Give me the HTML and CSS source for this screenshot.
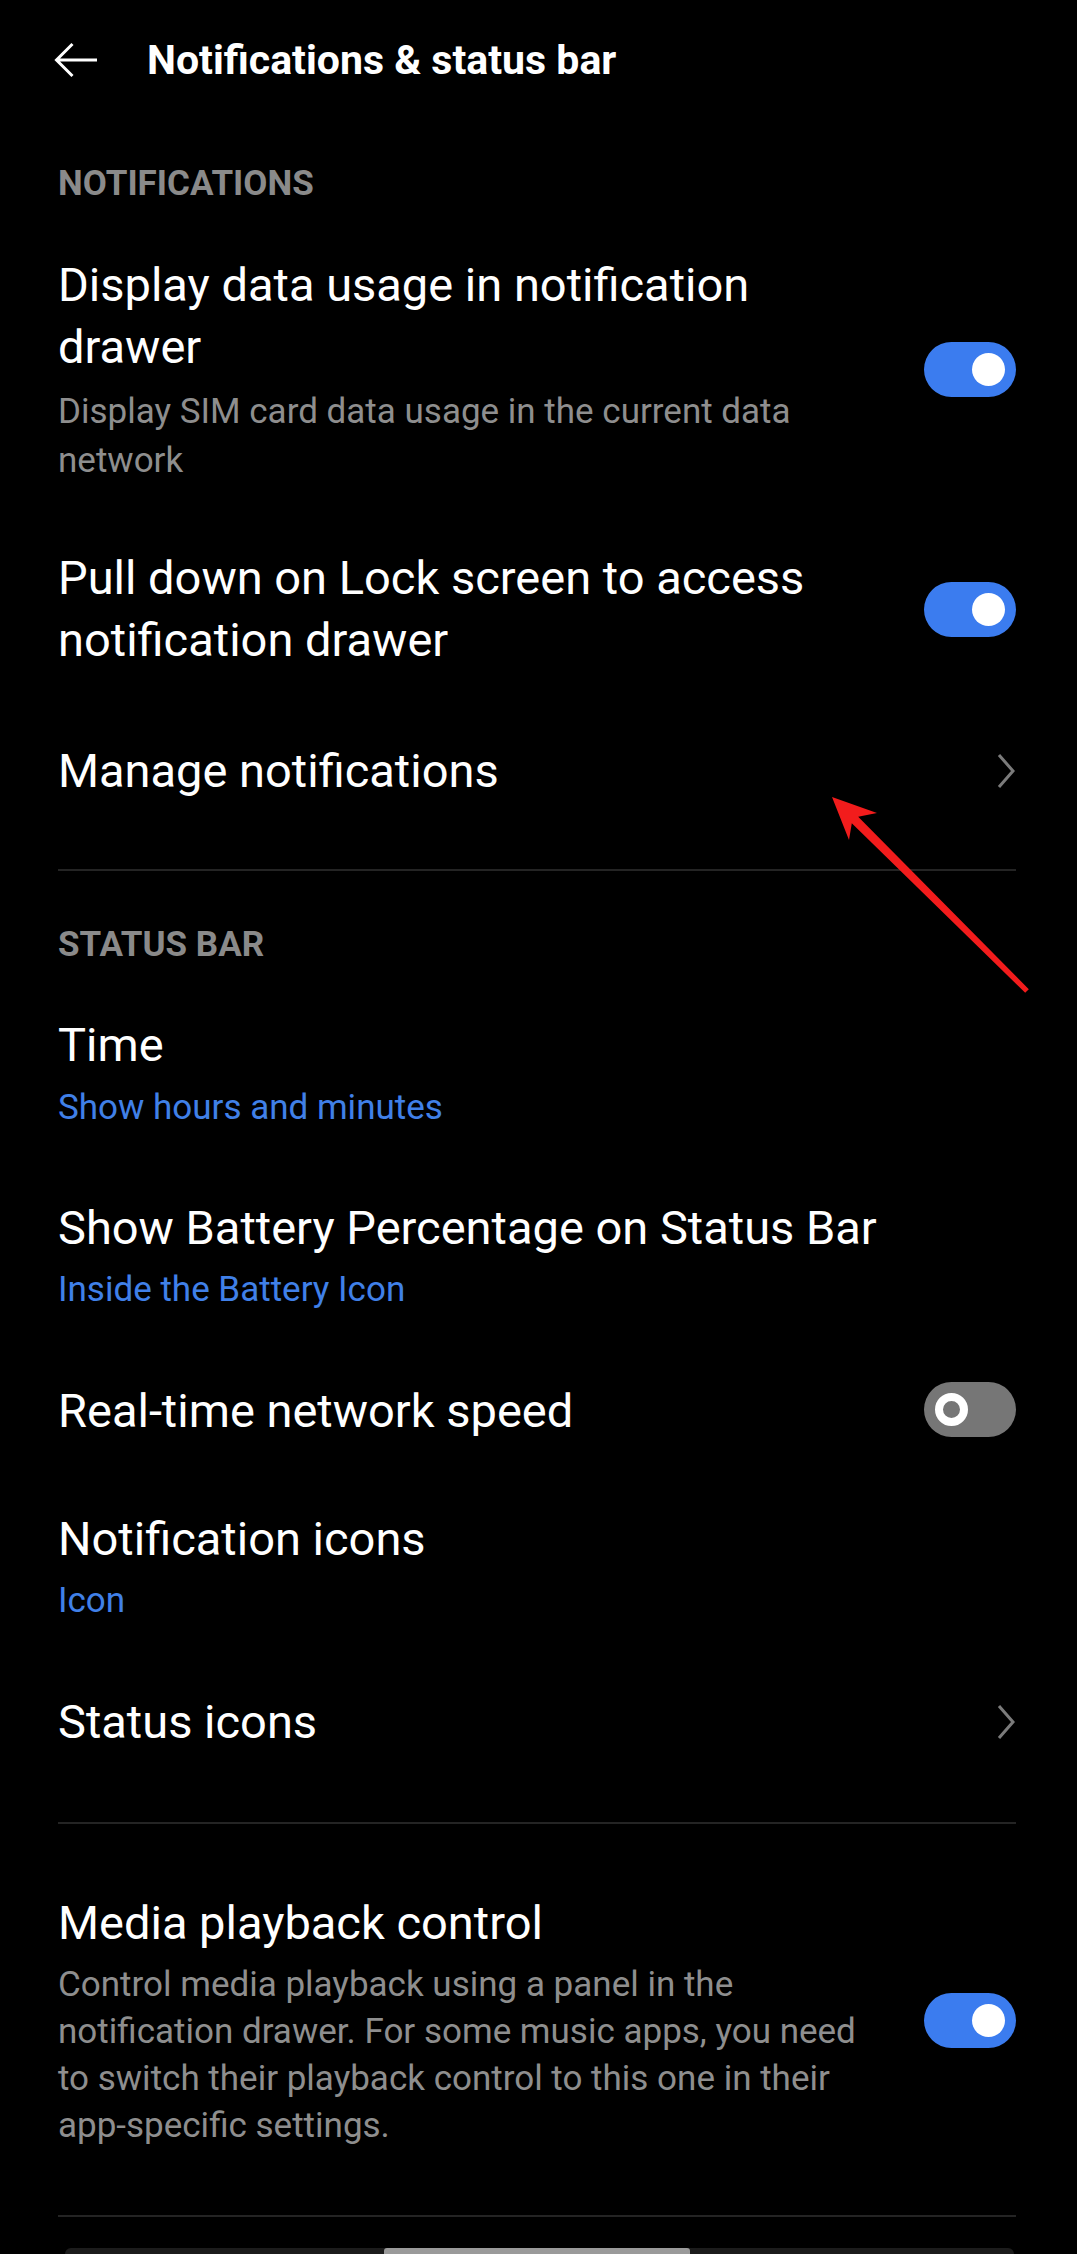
FILE: index.html
```html
<!DOCTYPE html>
<html lang="en">
<head>
<meta charset="utf-8">
<title>Notifications &amp; status bar</title>
<link rel="stylesheet" href="styles.css">
</head>
<body>
<div class="page">
  <header class="appbar">
    <svg class="back" viewBox="0 0 45 36" aria-hidden="true">
      <path d="M2.5 18 H43 M18.5 2 L2.5 18 L18.5 34" fill="none" stroke="#fff" stroke-width="3"/>
    </svg>
    <h1 class="appbar-title">Notifications &amp; status bar</h1>
  </header>

  <div class="section-label first">NOTIFICATIONS</div>

  <div class="row first-row">
    <div class="row-text">
      <div class="title">Display data usage in notification drawer</div>
      <div class="sub">Display SIM card data usage in the current data network</div>
    </div>
    <span class="toggle on"><span class="knob"></span></span>
  </div>

  <div class="row">
    <div class="row-text">
      <div class="title">Pull down on Lock screen to access notification drawer</div>
    </div>
    <span class="toggle on"><span class="knob"></span></span>
  </div>

  <div class="row manage">
    <div class="row-text">
      <div class="title">Manage notifications</div>
    </div>
    <svg class="chevron" viewBox="0 0 20 36" aria-hidden="true"><path d="M3 2 L17 18 L3 34" fill="none" stroke="#7b7b7b" stroke-width="3"/></svg>
  </div>

  <div class="divider d1"></div>

  <div class="section-label">STATUS BAR</div>

  <div class="row time-row">
    <div class="row-text">
      <div class="title">Time</div>
      <div class="sub blue">Show hours and minutes</div>
    </div>
  </div>

  <div class="row">
    <div class="row-text">
      <div class="title">Show Battery Percentage on Status Bar</div>
      <div class="sub blue">Inside the Battery Icon</div>
    </div>
  </div>

  <div class="row">
    <div class="row-text">
      <div class="title">Real-time network speed</div>
    </div>
    <span class="toggle off"><span class="knob"></span></span>
  </div>

  <div class="row">
    <div class="row-text">
      <div class="title">Notification icons</div>
      <div class="sub blue">Icon</div>
    </div>
  </div>

  <div class="row">
    <div class="row-text">
      <div class="title">Status icons</div>
    </div>
    <svg class="chevron" viewBox="0 0 20 36" aria-hidden="true"><path d="M3 2 L17 18 L3 34" fill="none" stroke="#7b7b7b" stroke-width="3"/></svg>
  </div>

  <div class="divider d2"></div>

  <div class="row media">
    <div class="row-text">
      <div class="title">Media playback control</div>
      <div class="sub">Control media playback using a panel in the notification drawer. For some music apps, you need to switch their playback control to this one in their app-specific settings.</div>
    </div>
    <span class="toggle on"><span class="knob"></span></span>
  </div>

  <div class="divider d3"></div>

  <div class="navbar"><span class="handle"></span></div>

  <svg class="annotation" viewBox="0 0 1077 2254" aria-hidden="true">
    <polygon fill="#f21c1c" points="832,797 877,813 858.2,816.8 1028.8,989.2 1025.2,992.8 851.8,823.2 849,840"/>
  </svg>
</div>
</body>
</html>
```

FILE: styles.css
```css
html, body {
  margin: 0;
  padding: 0;
  background: #000;
  overflow: hidden;
}

.page {
  position: relative;
  width: 1077px;
  height: 2254px;
  overflow: hidden;
  background: #000;
  font-family: Roboto, "Noto Sans", "Liberation Sans", sans-serif;
  color: #fff;
}

.appbar {
  display: flex;
  align-items: center;
  height: 120px;
  padding-left: 54px;
}

.back {
  width: 45px;
  height: 36px;
  margin-right: 48px;
  flex: none;
}

.appbar-title {
  margin: 0;
  font-size: 41px;
  font-weight: 700;
  line-height: 48px;
  color: #fff;
}

.section-label {
  margin: 54px 58px 16px;
  font-size: 35px;
  font-weight: 700;
  line-height: 40px;
  color: #8a8a8a;
}

.section-label.first {
  margin-top: 44px;
  margin-bottom: 17px;
}

.row {
  display: flex;
  align-items: center;
  gap: 40px;
  padding: 33px 61px 33px 58px;
}

.row.first-row {
  padding-bottom: 29px;
}

.row.manage {
  padding-top: 36px;
  padding-bottom: 30px;
}

.row-text {
  flex: 1;
  min-width: 0;
}

.title {
  font-size: 47px;
  line-height: 62px;
  font-weight: 400;
  color: #fff;
}

.sub {
  margin-top: 7px;
  font-size: 35px;
  line-height: 48px;
  color: #8e8e8e;
}

.first-row .sub {
  margin-top: 9px;
  line-height: 49px;
}

.time-row .sub {
  margin-top: 8px;
}

.time-row {
  padding-bottom: 32px;
}

.media .sub {
  margin-top: 7px;
  line-height: 47px;
}

.sub.blue {
  color: #4080e8;
}

.toggle {
  position: relative;
  flex: none;
  width: 92px;
  height: 55px;
  border-radius: 28px;
  box-sizing: border-box;
}

.toggle.on {
  background: #3b7cef;
}

.toggle.off {
  background: #767676;
  margin-top: -4px;
}

.knob {
  position: absolute;
  top: 11px;
  width: 33px;
  height: 33px;
  border-radius: 50%;
  box-sizing: border-box;
}

.toggle.on .knob {
  right: 11px;
  background: #fff;
}

.toggle.off .knob {
  left: 11px;
  border: 8px solid #fff;
}

.chevron {
  flex: none;
  width: 20px;
  height: 36px;
}

.divider {
  height: 2px;
  margin: 0 61px 0 58px;
  background: #242424;
}

.divider.d1 {
  margin-top: 37px;
}

.divider.d2 {
  margin-top: 36px;
  margin-bottom: 35px;
}

.divider.d3 {
  margin-top: 33px;
}

.navbar {
  display: flex;
  height: 6px;
  margin: 31px 63px 0 65px;
  background: #1c1c1c;
  border-radius: 18px 18px 0 0;
}

.handle {
  width: 306px;
  height: 6px;
  margin-left: 319px;
  background: #9a9a9a;
  border-radius: 3px 3px 0 0;
}

.annotation {
  position: absolute;
  left: 0;
  top: 0;
  width: 1077px;
  height: 2254px;
  pointer-events: none;
}
```
